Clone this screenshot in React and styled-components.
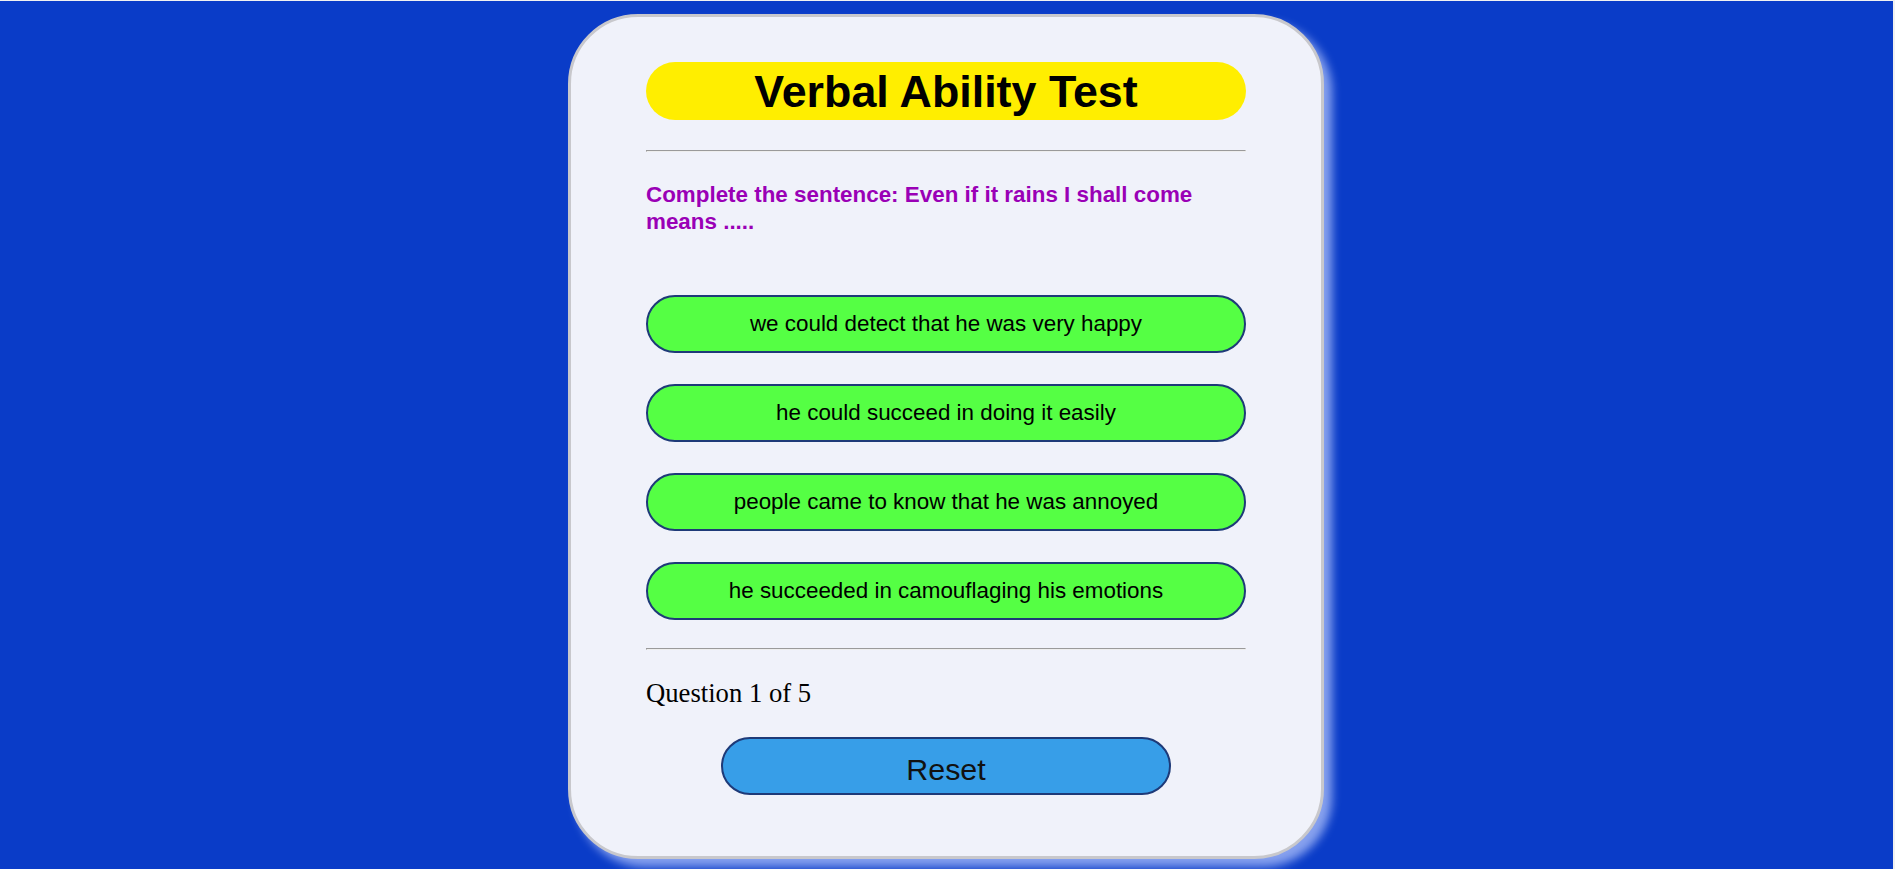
import React, { useState } from "react";
import styled, { createGlobalStyle } from "styled-components";

const GlobalStyle = createGlobalStyle`
  html, body {
    margin: 0;
    padding: 0;
    background: #f1f1f1;
    overflow: hidden;
  }
  * { box-sizing: border-box; }
`;

const Page = styled.div`
  margin: 1px 2px 0 0;
  height: calc(100vh - 1px);
  background: #0a3cc8;
  display: flex;
  justify-content: center;
  align-items: flex-start;
  padding-top: 13px;
  padding-right: 1px;
  overflow: hidden;
  font-family: "Liberation Sans", Arial, sans-serif;
`;

const Card = styled.div`
  width: 756px;
  padding: 45px 75px 61px;
  background: #f0f2fa;
  border: 3px solid #c8c8cc;
  border-radius: 70px;
  box-shadow: 8px 8px 10px rgba(190, 205, 255, 0.7);
  display: flex;
  flex-direction: column;
  align-items: stretch;
`;

const Title = styled.h1`
  margin: 0;
  height: 58px;
  line-height: 58px;
  border-radius: 29px;
  background: #ffee00;
  color: #000;
  text-align: center;
  font-family: "Liberation Sans", Arial, sans-serif;
  font-size: 44.8px;
  font-weight: bold;
`;

const Divider = styled.hr`
  margin: ${(p) => p.$top}px 0 0;
  height: 0;
  border: 0;
  border-top: 1px solid #9a9a9a;
  border-left: 1px solid #9a9a9a;
  border-bottom: 1px solid #eeeeee;
  border-right: 1px solid #eeeeee;
`;

const Question = styled.p`
  margin: 29px 0 0;
  color: #9a00b6;
  font-size: 22.4px;
  line-height: 27px;
  font-weight: bold;
  font-family: "Liberation Sans", Arial, sans-serif;
`;

const Options = styled.div`
  margin-top: 60px;
  display: flex;
  flex-direction: column;
  gap: 31px;
`;

const OptionButton = styled.button`
  height: 58px;
  width: 100%;
  border: 2px solid #1e3a78;
  border-radius: 29px;
  background: #55ff44;
  color: #000;
  font-family: "Liberation Sans", Arial, sans-serif;
  font-size: 22.4px;
  display: flex;
  align-items: center;
  justify-content: center;
  padding: 0 10px;
  cursor: pointer;
`;

const Counter = styled.div`
  margin-top: 28px;
  font-family: "Liberation Serif", "Times New Roman", serif;
  font-size: 26.67px;
  line-height: 31px;
  color: #000;
`;

const ResetButton = styled.button`
  margin: 28px auto 0;
  width: 450px;
  height: 58px;
  border: 2px solid #1e3a78;
  border-radius: 29px;
  background: #379ee8;
  color: #111;
  font-family: "Liberation Sans", Arial, sans-serif;
  font-size: 30.4px;
  padding: 7px 0 0;
  display: flex;
  align-items: center;
  justify-content: center;
  cursor: pointer;
`;

const questions = [
  {
    text: "Complete the sentence: Even if it rains I shall come means .....",
    options: [
      "we could detect that he was very happy",
      "he could succeed in doing it easily",
      "people came to know that he was annoyed",
      "he succeeded in camouflaging his emotions",
    ],
  },
];

export default function App() {
  const [index] = useState(0);
  const q = questions[index];
  return (
    <>
      <GlobalStyle />
      <Page>
        <Card>
          <Title>Verbal Ability Test</Title>
          <Divider $top={30} />
          <Question>{q.text}</Question>
          <Options>
            {q.options.map((o) => (
              <OptionButton key={o}>{o}</OptionButton>
            ))}
          </Options>
          <Divider $top={28} />
          <Counter>Question {index + 1} of 5</Counter>
          <ResetButton>Reset</ResetButton>
        </Card>
      </Page>
    </>
  );
}
